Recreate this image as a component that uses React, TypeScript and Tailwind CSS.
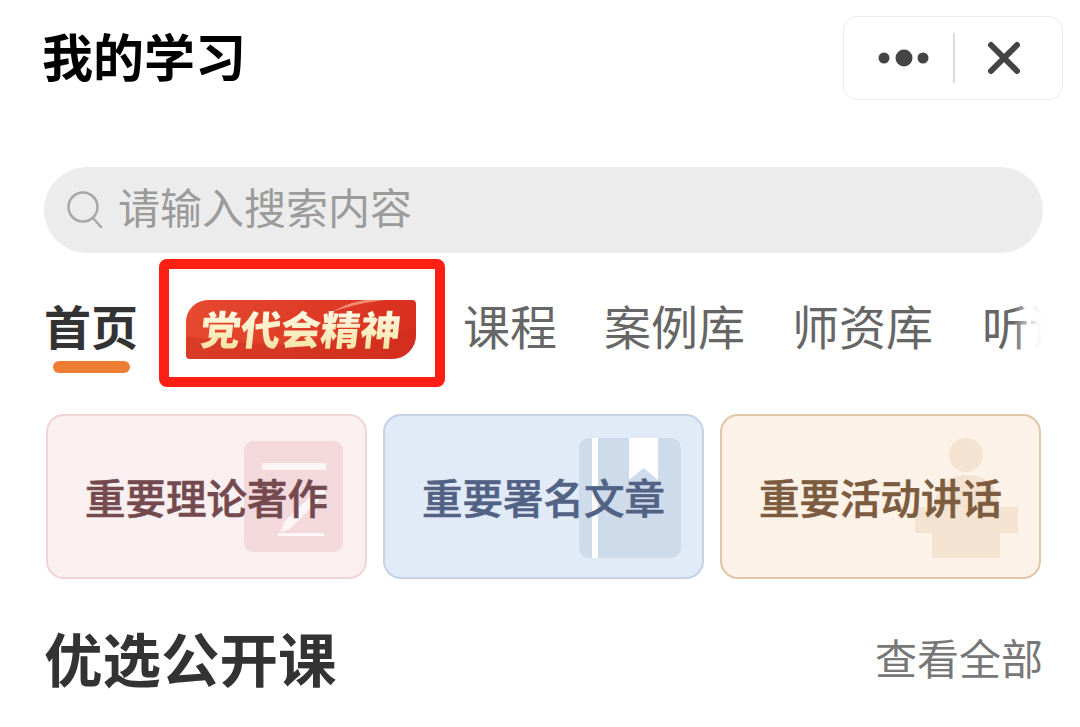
import React from 'react';

const FONT = "font-['Noto_Sans_CJK_SC','Noto_Sans',sans-serif]";

const TheoryIcon = () => (
  <svg width="99" height="111" viewBox="0 0 99 111" className="absolute left-[196px] top-[25px]" aria-hidden="true">
    <rect width="99" height="111" rx="9" fill="#f3d9db" />
    <rect x="18" y="22" width="64" height="7" fill="#fdf5f6" />
    <path d="M34 92h46v3H34z" fill="#fdf5f6" />
    <path d="M76 46l6 6-36 36-9 3 3-10z" fill="#fdf5f6" />
  </svg>
);

const ArticleIcon = () => (
  <svg width="102" height="120" viewBox="0 0 102 120" className="absolute left-[194px] top-[22px]" aria-hidden="true">
    <rect width="102" height="120" rx="10" fill="#cddbeb" />
    <rect x="13" width="6" height="120" fill="#ffffff" />
    <path d="M50 0h29v42L64.500 30 50 42z" fill="#ffffff" />
  </svg>
);

const SpeechIcon = () => (
  <svg width="104" height="121" viewBox="0 0 104 121" className="absolute left-[193px] top-[21px]" aria-hidden="true">
    <circle cx="51" cy="18" r="17" fill="#f5e3d2" />
    <path d="M20 70c0-22 14-32 32-32s32 10 32 32z" fill="#f5e3d2" />
    <rect x="0" y="70" width="103" height="26" fill="#f5e3d2" />
    <rect x="17" y="96" width="68" height="25" fill="#f5e3d2" />
  </svg>
);

const cards = [
  { title: '重要理论著作', box: 'bg-[#fbf0f1] border-[#efd5d8]', text: 'text-[#744a4f]', icon: <TheoryIcon /> },
  { title: '重要署名文章', box: 'bg-[#e1ebf8] border-[#c3d2e5]', text: 'text-[#526285]', icon: <ArticleIcon /> },
  { title: '重要活动讲话', box: 'bg-[#fcf2e7] border-[#e0c6a8]', text: 'text-[#7c5b3e]', icon: <SpeechIcon /> },
];

const tabs = [
  { label: '课程', gap: 'ml-[18px]' },
  { label: '案例库', gap: 'ml-[47px]' },
  { label: '师资库', gap: 'ml-[47px]' },
  { label: '听课', gap: 'ml-[49px]' },
];

export default function App() {
  return (
    <div className={`${FONT} w-[1080px] h-[727px] overflow-hidden bg-white px-[44px] pt-[16px]`}>
      {/* title bar */}
      <div className="flex items-center justify-between mr-[-27px]">
        <h1 className="text-[51px] leading-[60px] font-bold text-black -ml-[2px] pb-[6px]">我的学习</h1>
        <div className="flex items-center w-[220px] h-[84px] rounded-[14px] border border-[#ececec] bg-white pl-[34px]">
          <svg width="52" height="18" viewBox="0 0 52 18" aria-hidden="true">
            <circle cx="6" cy="9" r="5.500" fill="#444" />
            <circle cx="26" cy="9" r="8.500" fill="#444" />
            <circle cx="45" cy="9" r="5.500" fill="#444" />
          </svg>
          <div className="ml-[23px] w-[2px] h-[50px] bg-[#dcdcdc]" />
          <svg width="34" height="34" viewBox="0 0 34 34" className="ml-[32px]" aria-hidden="true">
            <path d="M4 4l26 26M30 4L4 30" stroke="#444" strokeWidth="6" strokeLinecap="round" />
          </svg>
        </div>
      </div>

      {/* search */}
      <div className="mt-[67px] flex items-center h-[86px] w-[999px] rounded-full bg-[#ececec] pl-[22px]">
        <svg width="38" height="40" viewBox="0 0 38 40" className="-mt-[1px]" aria-hidden="true">
          <circle cx="17" cy="17" r="14.500" fill="none" stroke="#a8a8a8" strokeWidth="2.500" />
          <path d="M27 28l8 9" stroke="#a8a8a8" strokeWidth="2.500" strokeLinecap="round" />
        </svg>
        <span className="ml-[14px] pb-[8px] text-[42px] leading-[50px] text-[#9b9b9b]">请输入搜索内容</span>
      </div>

      {/* tabs */}
      <div className="relative mt-[6px] flex items-center h-[128px] w-[999px] overflow-hidden whitespace-nowrap">
        <div className="ml-[2px] flex flex-col items-center w-[90px] shrink-0 pt-[27px]">
          <span className="text-[47px] leading-[50px] font-bold text-[#333]">首页</span>
          <span className="mt-[11px] w-[77px] h-[12px] rounded-full bg-[#ee7d34]" />
        </div>
        <div className="ml-[23px] flex items-center justify-center shrink-0 w-[286px] h-[128px] rounded-[8px] border-[10px] border-[#fe1f14] bg-white pr-[2px]">
          <div className="relative mt-[13px] flex items-center justify-center w-[230px] h-[59px] overflow-hidden rounded-tl-[22px] rounded-br-[24px] rounded-tr-[4px] rounded-bl-[4px] bg-gradient-to-r from-[#e5492f] to-[#d92f1f]">
            <svg width="230" height="59" viewBox="0 0 230 59" className="absolute left-0 top-0" aria-hidden="true">
              <path d="M0 36c60 10 130 14 230-8v31H0z" fill="#c92c1c" opacity="0.45" />
              <path d="M146 12c18-6 34-10 54-12h-20c-14 2-24 6-34 12z" fill="#f08a70" />
            </svg>
            <span className="relative -mt-[4px] -skew-x-6 text-[40px] leading-[48px] font-black bg-gradient-to-b from-[#fffdf0] to-[#f6e2a0] bg-clip-text text-transparent">党代会精神</span>
          </div>
        </div>
        {tabs.map(tab => (
          <span key={tab.label} className={`${tab.gap} shrink-0 pt-[4px] text-[47px] leading-[50px] text-[#666]`}>
            {tab.label}
          </span>
        ))}
        <div className="absolute right-0 top-0 w-[30px] h-full bg-gradient-to-r from-white/0 via-white/95 via-[80%] to-white" />
      </div>

      {/* entry cards */}
      <div className="mt-[27px] ml-[2px] flex gap-[16px]">
        {cards.map(card => (
          <div key={card.title} className={`relative flex items-center justify-center w-[321px] h-[165px] shrink-0 overflow-hidden rounded-[18px] border-[2px] ${card.box}`}>
            {card.icon}
            <span className={`relative text-[40.500px] leading-[50px] font-medium [-webkit-text-stroke:0.6px] ${card.text}`}>{card.title}</span>
          </div>
        ))}
      </div>

      {/* section heading */}
      <div className="mt-[48px] flex items-center justify-between w-[999px]">
        <h2 className="text-[58.500px] leading-[60px] font-bold text-[#333]">优选公开课</h2>
        <span className="text-[42px] leading-[50px] text-[#777]">查看全部</span>
      </div>
    </div>
  );
}
